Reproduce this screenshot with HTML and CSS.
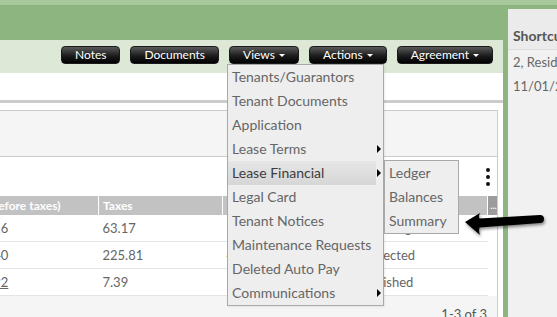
FILE: index.html
```html
<!DOCTYPE html>
<html lang="en">
<head>
  <meta charset="UTF-8">
  <title>Lease - Views menu</title>
  <link rel="stylesheet" href="styles.css">
</head>
<body>
  <div class="page">
    <div class="main">
      <!-- Toolbar -->
      <div class="toolbar">
        <button class="btn">Notes</button>
        <button class="btn">Documents</button>
        <div class="dropdown">
          <button class="btn">Views <span class="caret"></span></button>
          <ul class="menu">
            <li><span class="label">Tenants/Guarantors</span></li>
            <li><span class="label">Tenant Documents</span></li>
            <li><span class="label">Application</span></li>
            <li class="has-sub"><span class="label">Lease Terms</span><span class="sub-arrow"></span></li>
            <li class="has-sub active">
              <span class="label">Lease Financial</span><span class="sub-arrow"></span>
              <ul class="submenu">
                <li>Ledger</li>
                <li>Balances</li>
                <li>Summary</li>
              </ul>
            </li>
            <li><span class="label">Legal Card</span></li>
            <li><span class="label">Tenant Notices</span></li>
            <li><span class="label">Maintenance Requests</span></li>
            <li><span class="label">Deleted Auto Pay</span></li>
            <li class="has-sub"><span class="label">Communications</span><span class="sub-arrow"></span></li>
          </ul>
        </div>
        <button class="btn">Actions <span class="caret"></span></button>
        <button class="btn">Agreement <span class="caret"></span></button>
      </div>

      <!-- Content -->
      <div class="content">
        <div class="rule"></div>
        <div class="box">
          <div class="box-head"></div>
          <div class="box-tools">
            <span class="kebab"><i></i><i></i><i></i></span>
          </div>
          <table class="grid">
            <thead>
              <tr>
                <th class="c1">Amount (before taxes)</th>
                <th class="c2">Taxes</th>
                <th class="c3">Total</th>
                <th class="c4">Status</th>
                <th class="c5">...</th>
              </tr>
            </thead>
            <tbody>
              <tr>
                <td>$10,531.16</td>
                <td>63.17</td>
                <td>10,594.33</td>
                <td>Pending</td>
                <td></td>
              </tr>
              <tr>
                <td>$45,162.40</td>
                <td>225.81</td>
                <td>45,388.21</td>
                <td>Rejected</td>
                <td></td>
              </tr>
              <tr>
                <td><a href="#">$14,777.92</a></td>
                <td>7.39</td>
                <td>14,785.31</td>
                <td>Finished</td>
                <td></td>
              </tr>
            </tbody>
          </table>
          <div class="grid-foot">1-3 of 3</div>
        </div>
      </div>
    </div>

    <!-- Right sidebar -->
    <div class="side">
      <div class="side-head">Shortcuts</div>
      <div class="side-item">2, Residential Lease</div>
      <div class="side-item">11/01/2019</div>
    </div>
  </div>

  <!-- Callout arrow -->
  <svg class="callout" width="90" height="40" viewBox="0 0 90 40">
    <path d="M5 17 L20 8 Q18.5 11 19.5 13.5 L80 10 A4 4 0 0 1 80 18 L19.5 22.5 Q18.5 26 20 30 Z" fill="#000"/>
  </svg>
</body>
</html>
```

FILE: styles.css
```css
body {
  margin: 0;
  width: 557px;
  height: 317px;
  overflow: hidden;
  position: relative;
  font-family: Lato, "Open Sans", sans-serif;
  background: linear-gradient(#a9c99c 0, #a9c99c 5px, #8cb57f 5px);
  color: #666;
}
ul {
  list-style: none;
  margin: 0;
  padding: 0;
}
.page {
  display: flex;
  align-items: flex-start;
}
.main {
  width: 503px;
  margin-top: 40px;
  flex-shrink: 0;
}
.toolbar {
  height: 33px;
  background-color: #dde9d6;
  display: flex;
  justify-content: flex-end;
  align-items: flex-start;
  gap: 10px;
  padding: 6px 10px 0 0;
  box-sizing: border-box;
}
.btn {
  height: 18px;
  padding: 0 13px;
  border: 1px solid #1a1a1a;
  border-radius: 4px;
  background: linear-gradient(#5a5a5a, #1c1c1c 55%, #000);
  color: #fff;
  font-family: Lato, sans-serif;
  font-size: 12px;
  line-height: 16px;
  cursor: pointer;
  display: flex;
  align-items: center;
  gap: 4px;
}
.caret {
  width: 0;
  height: 0;
  border-left: 3px solid transparent;
  border-right: 3px solid transparent;
  border-top: 3px solid #fff;
  margin-top: 1px;
}
.dropdown {
  position: relative;
}
.menu {
  position: absolute;
  top: 100%;
  left: -2px;
  width: 155px;
  background-color: #eeeeee;
  border: 1px solid #a9a9a9;
  z-index: 10;
  box-shadow: 1px 1px 2px rgba(0,0,0,0.08);
}
.menu > li {
  position: relative;
  display: flex;
  height: 24px;
  font-size: 14px;
  line-height: 24px;
  padding-right: 7px;
}
.menu .label {
  flex: 1;
  padding-left: 4px;
  white-space: nowrap;
}
.menu .active .label {
  background: linear-gradient(#e6e6e6, #d6d6d6);
  color: #3c3c3c;
}
.sub-arrow {
  position: absolute;
  right: 2px;
  top: 8px;
  width: 0;
  height: 0;
  border-top: 4px solid transparent;
  border-bottom: 4px solid transparent;
  border-left: 4px solid #000;
}
.submenu {
  position: absolute;
  left: 100%;
  top: -1px;
  width: 73px;
  margin-left: 1px;
  background-color: #eeeeee;
  border: 1px solid #a9a9a9;
}
.submenu li {
  height: 24px;
  line-height: 24px;
  padding-left: 4px;
  font-size: 14px;
  color: #666;
}
.content {
  background-color: #fff;
  height: 244px;
  padding-top: 27px;
  box-sizing: border-box;
  overflow: hidden;
}
.rule {
  height: 3px;
  background-color: #cccccc;
}
.box {
  margin: 7px 5px 0 0;
  border: 1px solid #cccccc;
  border-left: none;
  overflow: hidden;
}
.box-head {
  height: 45px;
  background-color: #f5f5f5;
  border-bottom: 1px solid #cccccc;
}
.box-tools {
  height: 39px;
  display: flex;
  justify-content: flex-end;
  align-items: center;
  padding-right: 7px;
}
.kebab {
  display: flex;
  flex-direction: column;
  gap: 3px;
}
.kebab i {
  width: 4px;
  height: 4px;
  border-radius: 50%;
  background-color: #111;
}
.grid {
  border-collapse: collapse;
  margin-left: -62px;
  width: calc(100% + 62px);
  table-layout: fixed;
  font-size: 13px;
}
.grid th {
  height: 19px;
  padding: 0 4px;
  background-color: #c2c2c2;
  color: #fff;
  font-size: 12px;
  text-align: left;
  border-right: 1px solid #fff;
  white-space: nowrap;
  overflow: hidden;
}
.grid th.c5 {
  background-color: #9c9c9c;
  border-right: none;
  padding: 0;
  text-align: center;
  font-size: 9px;
}
.grid .c1 { width: 152px; }
.grid .c2 { width: 115px; }
.grid .c3 { width: 130px; }
.grid .c4 { width: 117px; }
.grid .c5 { width: 11px; }
.grid td {
  height: 26px;
  padding: 0 4px;
  border-bottom: 1px solid #e4e4e4;
  color: #666;
  white-space: nowrap;
  overflow: hidden;
}
.grid td:last-child {
  border-bottom: none;
}
.grid a {
  color: #666;
}
.grid-foot {
  height: 40px;
  background-color: #f5f5f5;
  text-align: right;
  padding: 10px 10px 0 0;
  box-sizing: border-box;
  font-size: 13px;
  color: #555;
}
.side {
  width: 49px;
  margin: 9px 0 0 5px;
  height: 308px;
  background-color: #f1f1f1;
  overflow: hidden;
  white-space: nowrap;
}
.side-head {
  height: 41px;
  box-sizing: border-box;
  padding: 18px 0 0 5px;
  background-color: #ebebeb;
  border-bottom: 1px solid #dddddd;
  font-size: 14px;
  font-weight: bold;
  color: #555;
}
.side-item {
  padding-left: 5px;
  font-size: 13px;
  line-height: 24px;
  color: #666;
}
.callout {
  position: absolute;
  left: 460px;
  top: 205px;
  z-index: 20;
  filter: drop-shadow(1px 2px 1.5px rgba(0,0,0,0.45));
}
```
